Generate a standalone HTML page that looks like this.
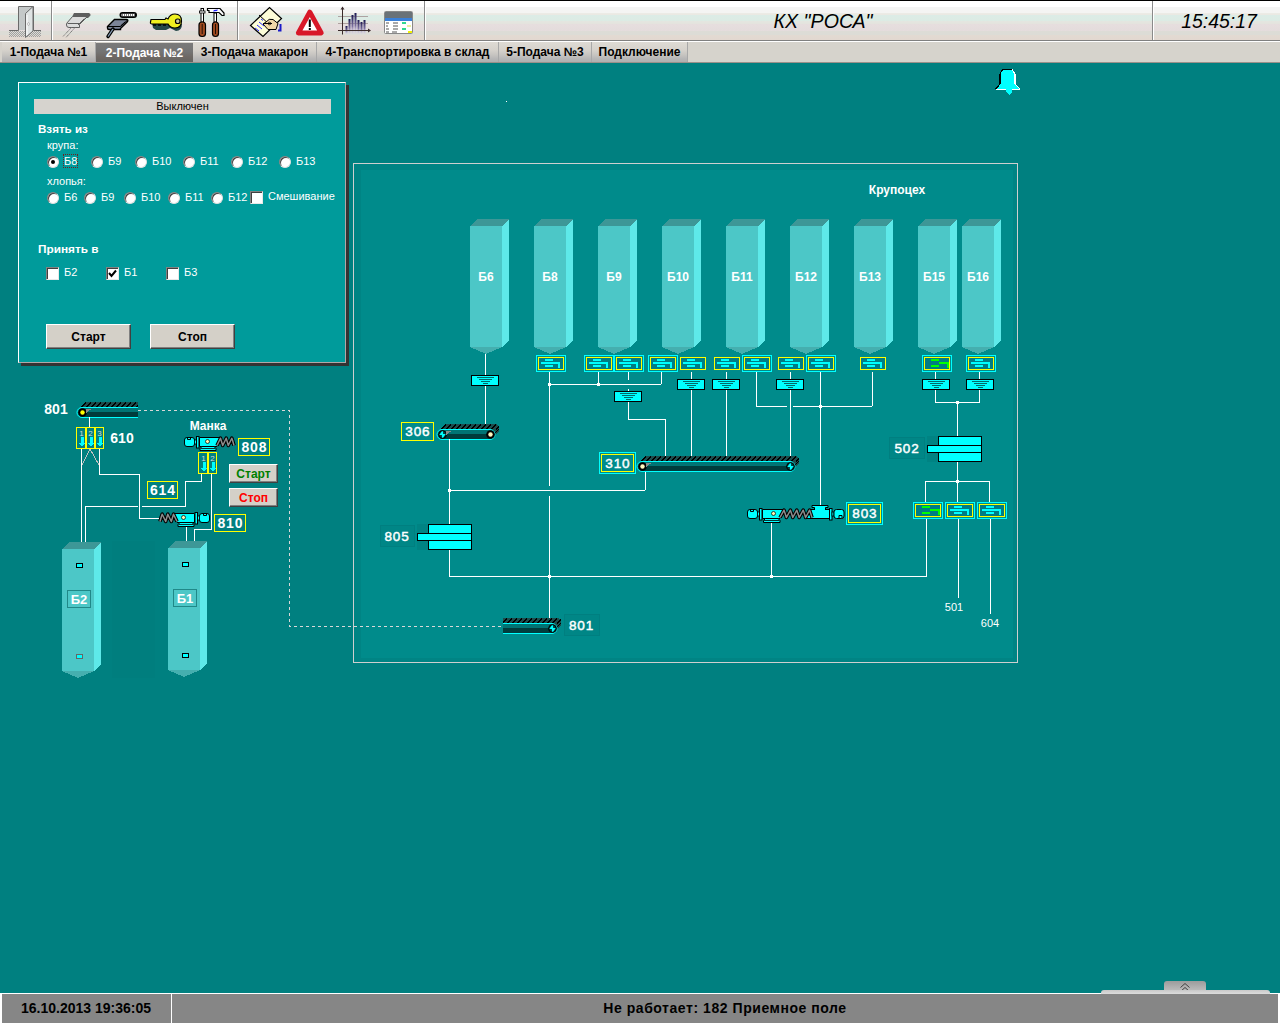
<!DOCTYPE html>
<html><head><meta charset="utf-8">
<style>
*{margin:0;padding:0;box-sizing:border-box}
html,body{width:1280px;height:1024px;overflow:hidden;background:#008080;font-family:"Liberation Sans", sans-serif}
.abs{position:absolute}
#tb{position:absolute;left:0;top:0;width:1280px;height:42px;border-top:1px solid #000;
background:linear-gradient(#ffffff 0px,#ffffff 6px,#f4f4f4 6px,#f4f4f2 12px,#ecece6 12px,#eae8e2 14px,#dcece6 14px,#dcebe4 20px,#e4e6e0 20px,#e4e4de 23px,#e6dede 23px,#e4dcdc 30px,#dddcd6 30px,#dcdcd6 34px,#e2dad2 34px,#e2d8d0 39px);}
#tb:after{content:"";position:absolute;left:0;top:39px;width:1280px;height:1px;background:#808080}
#tb:before{content:"";position:absolute;left:0;top:40px;width:1280px;height:1px;background:#fff}
.sep{position:absolute;top:0px;width:2px;height:39px;border-left:1px solid #8a8a8a;border-right:1px solid #fff}
#tabs{position:absolute;left:0;top:42px;width:1280px;height:21px;background:#d6d3cc;border-bottom:1px solid #9a908a}
.tab{position:absolute;top:0;height:20px;font-size:12px;font-weight:bold;color:#000;line-height:20px;text-align:center;
background:linear-gradient(#dedbd4,#d6d2cc 40%,#c6c4c0 65%,#b6b6b6 85%,#b0b0b0);border-right:1px solid #a8a8a8}
.tab.act{top:1px;height:19px;line-height:20px;background:linear-gradient(#7a7a7a,#747474 45%,#6e6864 75%,#646460);color:#fff;border-right:none}
#ttl{position:absolute;left:700px;top:9px;width:246px;text-align:center;font-size:19.6px;font-style:italic;color:#000}
#clk{position:absolute;left:1169px;top:9px;width:100px;text-align:center;font-size:19.4px;font-style:italic;color:#000}
#panel{position:absolute;left:18px;top:82px;width:328px;height:281px;background:#009b9b;border:1px solid #fff;border-right-color:#b0a8a8;border-bottom-color:#b0a8a8;
box-shadow:3px 3px 0 #333}
.lbl{position:absolute;color:#fff;font-size:11px;white-space:nowrap}
.b{font-weight:bold}
.radio{position:absolute;width:12px;height:12px;border-radius:50%;background:#fff;border:1px solid #808080;border-right-color:#e0e0e0;border-bottom-color:#e0e0e0;box-shadow:inset 1px 1px 0 #404040}
.chk{position:absolute;width:13px;height:13px;background:#fff;border:1px solid #808080;border-right-color:#e8e8e8;border-bottom-color:#e8e8e8;box-shadow:inset 1px 1px 0 #404040}
.btn{position:absolute;background:#d4d0c8;border:1px solid #fff;border-right-color:#404040;border-bottom-color:#404040;box-shadow:inset -1px -1px 0 #808080;font-size:12px;font-weight:bold;text-align:center;color:#000}
#main{position:absolute;left:353px;top:163px;width:665px;height:500px;border:1px solid #cfcfcf;background:#008484}
#maini{position:absolute;left:7px;top:6px;width:652px;height:488px;background:#008b8b}
#status{position:absolute;left:0;top:993px;width:1280px;height:31px;background:#fff}
#st1{position:absolute;left:2px;top:1px;width:169px;height:29px;background:#868686;font-size:14px;font-weight:bold;line-height:29px;padding-left:19px;color:#000}
#st2{position:absolute;left:172px;top:1px;width:1106px;height:29px;background:#868686;font-size:14px;font-weight:bold;line-height:29px;text-align:center;color:#000;letter-spacing:0.55px}
svg text{font-family:"Liberation Sans", sans-serif}
</style></head><body>
<div id="tb">
 <div class="sep" style="left:51px"></div>
 <div class="sep" style="left:237px"></div>
 <div class="sep" style="left:424px"></div>
 <div class="sep" style="left:1152px"></div>
 <div id="ttl">КХ "РОСА"</div>
 <div id="clk">15:45:17</div>
 <svg class="abs" style="left:0;top:0" width="440" height="41" viewBox="0 0 440 41">
<defs><pattern id="dots" width="2" height="2" patternUnits="userSpaceOnUse"><rect width="1" height="1" fill="#a0a0a0"/><rect x="1" y="1" width="1" height="1" fill="#a0a0a0"/></pattern>
<linearGradient id="barg" x1="0" y1="0" x2="0" y2="1"><stop offset="0" stop-color="#1c1850"/><stop offset="0.6" stop-color="#7c70a0"/><stop offset="1" stop-color="#d8d0f0" stop-opacity="0.3"/></linearGradient></defs>
<!-- door -->
<rect x="9" y="30" width="32" height="6" fill="url(#dots)"/>
<path d="M9 29.5 H18.5 V5.5 H33.5 V29.5 H41" fill="none" stroke="#6a6a6a" stroke-width="1"/>
<rect x="19" y="6" width="14" height="23" fill="#c4c8c8"/>
<path d="M25.5 12.5 L33 5.5 V30 L25.5 36.5 Z" fill="#dfe3e3" stroke="#6a6a6a" stroke-width="1"/>
<path d="M27 14 V34" stroke="#fff" stroke-width="1"/>
<ellipse cx="28.5" cy="23" rx="0.9" ry="1.5" fill="#fff" stroke="#888" stroke-width="0.5"/>
<!-- plug gray -->
<path d="M74 12 H89 Q91 12.5 90.5 14.5 L88 17 H72.5 L72.5 15 Z" fill="#5e5e5e"/>
<path d="M72.5 15.5 H87.5 L79.5 23.5 V26.5 H69 Q66.5 26.5 66.5 24 V22.5 Z" fill="#dcdcdc" stroke="#5e5e5e" stroke-width="1"/>
<path d="M67.5 22.5 H79.5 L87.5 15.5 M84 18 L78 24" fill="none" stroke="#5e5e5e" stroke-width="1"/>
<path d="M72 26 L63 35.5 M75.5 26 L66 36.5" stroke="#6e6e6e" stroke-width="1" stroke-dasharray="1.2 0.6"/>
<!-- plug dark -->
<rect x="119.5" y="11" width="17.5" height="6" rx="3" fill="#000"/>
<rect x="121.5" y="12.8" width="13.5" height="2.4" fill="#fff"/>
<path d="M122 14 H135" stroke="#000" stroke-width="1.2" stroke-dasharray="1 1"/>
<path d="M114.5 18.5 H126.5 Q128.5 18.5 127.5 20.5 L120.5 27.5 V28.5 H109 Q107.5 28.5 107.5 27 V25.5 Z" fill="#7c8498" stroke="#000" stroke-width="1.4"/>
<path d="M108 25.5 H120.5 L127 19.5 M125 21 L120.5 25" fill="none" stroke="#000" stroke-width="1"/>
<path d="M113 28 L108 35.5" stroke="#000" stroke-width="3.4" stroke-linecap="round"/>
<path d="M113 28 L108 35.5" stroke="#8aa0b8" stroke-width="1.3"/>
<!-- key -->
<path d="M153 27 L156 29 H166 L170 27 L176 30 Q182 30 182 23 L167 22 H152 Z" fill="#254848"/>
<path d="M151 18.5 H165 L166 17 L168 18 Q170 13 175 13 Q181.5 13 181.5 20 Q181.5 27 175 27 Q170 27 168 23 H152 Q150 23 150.5 21 Z" fill="#f0f020" stroke="#000" stroke-width="1.2"/>
<rect x="175.5" y="18" width="4.5" height="4.5" rx="2" fill="#c8c8a0" stroke="#000" stroke-width="1.2"/>
<path d="M153 24 H166" stroke="#000" stroke-width="1.5" stroke-dasharray="3 2"/>
<!-- screwdriver -->
<rect x="201" y="7.5" width="2.5" height="13.5" fill="#fff" stroke="#000" stroke-width="1"/>
<rect x="199.5" y="10" width="5.5" height="2" fill="#fff" stroke="#000" stroke-width="0.8"/>
<rect x="199" y="21" width="6.5" height="14.5" rx="3" fill="#a04a20" stroke="#000" stroke-width="1.2"/>
<path d="M202.2 23 V33" stroke="#000" stroke-width="0.8"/>
<!-- hammer -->
<path d="M207.5 7.5 H220 L224 12 V14.5 H222 L219 11.5 H209 V9.5 H207.5 Z" fill="#fff" stroke="#000" stroke-width="1.2"/>
<path d="M214 9 L218 8.5 L217 10 L213 10.5 Z" fill="#2020ff"/>
<rect x="214" y="12" width="2.5" height="9" fill="#fff" stroke="#000" stroke-width="1"/>
<rect x="212.5" y="21" width="6" height="14.5" rx="3" fill="#a04a20" stroke="#000" stroke-width="1.2"/>
<path d="M215.5 23 V33" stroke="#000" stroke-width="0.8"/>
<!-- notebook -->
<path d="M250.5 24.5 L269.5 6.5 L281.5 17.5 L263 35.5 Z" fill="#fdfdd8" stroke="#000" stroke-width="1.2"/>
<path d="M259 14 L270.5 24.5" stroke="#000" stroke-width="1"/>
<path d="M261 18 L263 19.5 M259 21 L264 25 M257 24 L262 28 M255 27 L259 30" stroke="#2a2aff" stroke-width="1"/>
<path d="M266 21 Q269 17 273 18.5 L278 22.5 L276 28.5 H268 L263 23 Z" fill="#f0d8a8" stroke="#000" stroke-width="1"/>
<path d="M263 22.5 H272" stroke="#000" stroke-width="1"/>
<circle cx="269.5" cy="22.5" r="1.3" fill="none" stroke="#000" stroke-width="0.8"/>
<path d="M280.5 23 V29.5 H278" fill="none" stroke="#1a1ac8" stroke-width="2"/>
<!-- warning -->
<path d="M309.8 11 L321.3 32 H298.3 Z" fill="#fff" stroke="#d81828" stroke-width="4.8" stroke-linejoin="round"/>
<path d="M309.8 18.5 V26" stroke="#000" stroke-width="2"/>
<rect x="308.8" y="27" width="2" height="2" fill="#000"/>
<!-- chart -->
<path d="M338 15.5 H368 M338 22.5 H368" stroke="#a09090" stroke-width="0.8"/>
<g fill="url(#barg)">
<rect x="345.5" y="25" width="2" height="8"/><rect x="348.5" y="18" width="2" height="15"/><rect x="351.5" y="14" width="2" height="19"/>
<rect x="354.5" y="12" width="2" height="21"/><rect x="357.5" y="19" width="2" height="14"/><rect x="360.5" y="21" width="2" height="12"/><rect x="363.5" y="19" width="2" height="14"/>
</g>
<path d="M342.5 6.5 V33.5 M338 29.5 H369" stroke="#3a2a2a" stroke-width="1"/>
<path d="M340.5 8.5 L342.5 5.5 L344.5 8.5 Z M368 27.5 L371 29.5 L368 31.5 Z" fill="#3a2a2a"/>
<!-- table window -->
<rect x="384.5" y="10.5" width="28" height="22" rx="1" fill="#fff" stroke="#888" stroke-width="1"/>
<rect x="385" y="11" width="27" height="6" fill="#6a7278"/>
<rect x="385" y="17" width="27" height="3" fill="#3a80d8"/>
<path d="M386 22 H389 M393 22 H398 M386 25 H388 M393 25 H398 M386 28 H389 M393 28 H398 M386 31 H389 M392 31 H397" stroke="#555" stroke-width="1"/>
<rect x="402" y="21" width="4" height="2" fill="#30d890"/><rect x="402" y="27" width="4" height="2" fill="#30d890"/>
<rect x="408" y="30" width="4" height="2" fill="#f0f000"/><rect x="407" y="24" width="4" height="2" fill="#e8f0a0"/>
</svg>
</div>
<div id="tabs">
 <div class="tab" style="left:2px;width:94px">1-Подача №1</div>
 <div class="tab act" style="left:96px;width:97px">2-Подача №2</div>
 <div class="tab" style="left:193px;width:124px">3-Подача макарон</div>
 <div class="tab" style="left:317px;width:182px">4-Транспортировка в склад</div>
 <div class="tab" style="left:499px;width:93px">5-Подача №3</div>
 <div class="tab" style="left:592px;width:96px">Подключение</div>
</div>
<div id="main"><div id="maini"></div></div>
<div id="panel">
 <div class="abs" style="left:15px;top:16px;width:297px;height:15px;background:#d6d3ce;font-size:11px;line-height:15px;text-align:center;color:#000">Выключен</div>
 <div class="lbl b" style="left:19px;top:39px;font-size:11.6px">Взять из</div>
 <div class="lbl" style="left:28px;top:56px">крупа:</div>
 <div class="radio" style="left:28px;top:73px"><div style="position:absolute;left:3px;top:3px;width:4px;height:4px;border-radius:50%;background:#000"></div></div><div class="lbl" style="left:45px;top:72px;outline:1px dotted #702020;outline-offset:0px;">Б8</div>
<div class="radio" style="left:72px;top:73px"></div><div class="lbl" style="left:89px;top:72px;">Б9</div>
<div class="radio" style="left:116px;top:73px"></div><div class="lbl" style="left:133px;top:72px;">Б10</div>
<div class="radio" style="left:164px;top:73px"></div><div class="lbl" style="left:181px;top:72px;">Б11</div>
<div class="radio" style="left:212px;top:73px"></div><div class="lbl" style="left:229px;top:72px;">Б12</div>
<div class="radio" style="left:260px;top:73px"></div><div class="lbl" style="left:277px;top:72px;">Б13</div>
<div class="radio" style="left:28px;top:109px"></div><div class="lbl" style="left:45px;top:108px;">Б6</div>
<div class="radio" style="left:65px;top:109px"></div><div class="lbl" style="left:82px;top:108px;">Б9</div>
<div class="radio" style="left:105px;top:109px"></div><div class="lbl" style="left:122px;top:108px;">Б10</div>
<div class="radio" style="left:149px;top:109px"></div><div class="lbl" style="left:166px;top:108px;">Б11</div>
<div class="radio" style="left:192px;top:109px"></div><div class="lbl" style="left:209px;top:108px;">Б12</div>
<div class="chk" style="left:231px;top:108px"></div><div class="lbl" style="left:249px;top:107px">Смешивание</div>
<div class="chk" style="left:27px;top:184px"></div><div class="lbl" style="left:45px;top:183px">Б2</div>
<div class="chk" style="left:87px;top:184px"><svg width="11" height="11" style="position:absolute;left:0;top:0"><path d="M2 5 L4.5 8 L9 2.5" fill="none" stroke="#000" stroke-width="2"/></svg></div><div class="lbl" style="left:105px;top:183px">Б1</div>
<div class="chk" style="left:147px;top:184px"></div><div class="lbl" style="left:165px;top:183px">Б3</div>
 <div class="lbl" style="left:28px;top:92px">хлопья:</div>
 <div class="lbl b" style="left:19px;top:159px;font-size:11.8px">Принять в</div>
 <div class="btn" style="left:27px;top:241px;width:85px;height:25px;line-height:25px">Старт</div>
 <div class="btn" style="left:131px;top:241px;width:85px;height:25px;line-height:25px">Стоп</div>
</div>
<div class="btn" style="left:229px;top:464px;width:49px;height:19px;line-height:19px;color:#008000">Старт</div>
<div class="btn" style="left:229px;top:488px;width:49px;height:19px;line-height:19px;color:#ff0000">Стоп</div>
<svg class="abs" style="left:0;top:0" width="1280" height="1024" viewBox="0 0 1280 1024" shape-rendering="crispEdges">
<rect x="380.5" y="525.5" width="34" height="21" fill="#008686" stroke="#007f80"/>
<rect x="889.5" y="437.5" width="35" height="21" fill="#008686" stroke="#007f80"/>
<rect x="564.5" y="614.5" width="35" height="21" fill="#008686" stroke="#007f80"/>
<rect x="417" y="524" width="11" height="26" fill="#008383"/>
<rect x="927" y="436" width="11" height="26" fill="#008383"/>
<polygon points="470,226 477,219 509,219 502,226" fill="#3d9797"/>
<rect x="470" y="226" width="32" height="121" fill="#4cc7c7"/>
<polygon points="502,226 509,219 509,340 502,347" fill="#5ee9e9"/>
<polygon points="470,347 502,347 486,354" fill="#45afaf"/>
<text x="486" y="281" text-anchor="middle" font-size="12" font-weight="bold" fill="#fff" >Б6</text>
<polygon points="534,226 541,219 573,219 566,226" fill="#3d9797"/>
<rect x="534" y="226" width="32" height="121" fill="#4cc7c7"/>
<polygon points="566,226 573,219 573,340 566,347" fill="#5ee9e9"/>
<polygon points="534,347 566,347 550,354" fill="#45afaf"/>
<text x="550" y="281" text-anchor="middle" font-size="12" font-weight="bold" fill="#fff" >Б8</text>
<polygon points="598,226 605,219 637,219 630,226" fill="#3d9797"/>
<rect x="598" y="226" width="32" height="121" fill="#4cc7c7"/>
<polygon points="630,226 637,219 637,340 630,347" fill="#5ee9e9"/>
<polygon points="598,347 630,347 614,354" fill="#45afaf"/>
<text x="614" y="281" text-anchor="middle" font-size="12" font-weight="bold" fill="#fff" >Б9</text>
<polygon points="662,226 669,219 701,219 694,226" fill="#3d9797"/>
<rect x="662" y="226" width="32" height="121" fill="#4cc7c7"/>
<polygon points="694,226 701,219 701,340 694,347" fill="#5ee9e9"/>
<polygon points="662,347 694,347 678,354" fill="#45afaf"/>
<text x="678" y="281" text-anchor="middle" font-size="12" font-weight="bold" fill="#fff" >Б10</text>
<polygon points="726,226 733,219 765,219 758,226" fill="#3d9797"/>
<rect x="726" y="226" width="32" height="121" fill="#4cc7c7"/>
<polygon points="758,226 765,219 765,340 758,347" fill="#5ee9e9"/>
<polygon points="726,347 758,347 742,354" fill="#45afaf"/>
<text x="742" y="281" text-anchor="middle" font-size="12" font-weight="bold" fill="#fff" >Б11</text>
<polygon points="790,226 797,219 829,219 822,226" fill="#3d9797"/>
<rect x="790" y="226" width="32" height="121" fill="#4cc7c7"/>
<polygon points="822,226 829,219 829,340 822,347" fill="#5ee9e9"/>
<polygon points="790,347 822,347 806,354" fill="#45afaf"/>
<text x="806" y="281" text-anchor="middle" font-size="12" font-weight="bold" fill="#fff" >Б12</text>
<polygon points="854,226 861,219 893,219 886,226" fill="#3d9797"/>
<rect x="854" y="226" width="32" height="121" fill="#4cc7c7"/>
<polygon points="886,226 893,219 893,340 886,347" fill="#5ee9e9"/>
<polygon points="854,347 886,347 870,354" fill="#45afaf"/>
<text x="870" y="281" text-anchor="middle" font-size="12" font-weight="bold" fill="#fff" >Б13</text>
<polygon points="918,226 925,219 957,219 950,226" fill="#3d9797"/>
<rect x="918" y="226" width="32" height="121" fill="#4cc7c7"/>
<polygon points="950,226 957,219 957,340 950,347" fill="#5ee9e9"/>
<polygon points="918,347 950,347 934,354" fill="#45afaf"/>
<text x="934" y="281" text-anchor="middle" font-size="12" font-weight="bold" fill="#fff" >Б15</text>
<polygon points="962,226 969,219 1001,219 994,226" fill="#3d9797"/>
<rect x="962" y="226" width="32" height="121" fill="#4cc7c7"/>
<polygon points="994,226 1001,219 1001,340 994,347" fill="#5ee9e9"/>
<polygon points="962,347 994,347 978,354" fill="#45afaf"/>
<text x="978" y="281" text-anchor="middle" font-size="12" font-weight="bold" fill="#fff" >Б16</text>
<rect x="536.5" y="355.5" width="29" height="16" fill="none" stroke="#00ffff"/>
<rect x="538.5" y="357.5" width="25" height="12" fill="#007d84" stroke="#ffff00"/>
<path d="M545 359h8v2h-8z M541 362h19v6h-2v-4h-17z M545 365h8v2h-8z" fill="#00ffff"/>
<rect x="584.5" y="355.5" width="29" height="16" fill="none" stroke="#00ffff"/>
<rect x="586.5" y="357.5" width="25" height="12" fill="#007d84" stroke="#ffff00"/>
<path d="M593 359h8v2h-8z M589 362h19v6h-2v-4h-17z M593 365h8v2h-8z" fill="#00ffff"/>
<rect x="614.5" y="355.5" width="29" height="16" fill="none" stroke="#00ffff"/>
<rect x="616.5" y="357.5" width="25" height="12" fill="#007d84" stroke="#ffff00"/>
<path d="M623 359h8v2h-8z M619 362h19v6h-2v-4h-17z M623 365h8v2h-8z" fill="#00ffff"/>
<rect x="648.5" y="355.5" width="29" height="16" fill="none" stroke="#00ffff"/>
<rect x="650.5" y="357.5" width="25" height="12" fill="#007d84" stroke="#ffff00"/>
<path d="M657 359h8v2h-8z M653 362h19v6h-2v-4h-17z M657 365h8v2h-8z" fill="#00ffff"/>
<rect x="680.5" y="357.5" width="25" height="12" fill="#007d84" stroke="#ffff00"/>
<path d="M687 359h8v2h-8z M683 362h19v6h-2v-4h-17z M687 365h8v2h-8z" fill="#00ffff"/>
<rect x="714.5" y="357.5" width="25" height="12" fill="#007d84" stroke="#ffff00"/>
<path d="M721 359h8v2h-8z M717 362h19v6h-2v-4h-17z M721 365h8v2h-8z" fill="#00ffff"/>
<rect x="742.5" y="355.5" width="29" height="16" fill="none" stroke="#00ffff"/>
<rect x="744.5" y="357.5" width="25" height="12" fill="#007d84" stroke="#ffff00"/>
<path d="M751 359h8v2h-8z M747 362h19v6h-2v-4h-17z M751 365h8v2h-8z" fill="#00ffff"/>
<rect x="778.5" y="357.5" width="25" height="12" fill="#007d84" stroke="#ffff00"/>
<path d="M785 359h8v2h-8z M781 362h19v6h-2v-4h-17z M785 365h8v2h-8z" fill="#00ffff"/>
<rect x="806.5" y="355.5" width="29" height="16" fill="none" stroke="#00ffff"/>
<rect x="808.5" y="357.5" width="25" height="12" fill="#007d84" stroke="#ffff00"/>
<path d="M815 359h8v2h-8z M811 362h19v6h-2v-4h-17z M815 365h8v2h-8z" fill="#00ffff"/>
<rect x="860.5" y="357.5" width="25" height="12" fill="#007d84" stroke="#ffff00"/>
<path d="M867 359h8v2h-8z M863 362h19v6h-2v-4h-17z M867 365h8v2h-8z" fill="#00ffff"/>
<rect x="922.5" y="355.5" width="29" height="16" fill="none" stroke="#00ffff"/>
<rect x="924.5" y="357.5" width="25" height="12" fill="#007d84" stroke="#ffff00"/>
<path d="M931 359h8v2h-8z M939 362h10v6h-2v-4h-8z M931 365h8v2h-8z" fill="#00ff00"/>
<rect x="966.5" y="355.5" width="29" height="16" fill="none" stroke="#00ffff"/>
<rect x="968.5" y="357.5" width="25" height="12" fill="#007d84" stroke="#ffff00"/>
<path d="M975 359h8v2h-8z M971 362h19v6h-2v-4h-17z M975 365h8v2h-8z" fill="#00ffff"/>
<path d="M485.5 354 L485.5 375" fill="none" stroke="#ffffff" stroke-width="1"/>
<rect x="471.5" y="375.5" width="27" height="10" fill="#00ffff" stroke="#000"/>
<path d="M477 377.5h17 M479 379.5h13 M481 381.5h9 M483 383.5h5" stroke="#006b6b" stroke-width="1"/>
<path d="M485.5 386 L485.5 424" fill="none" stroke="#ffffff" stroke-width="1"/>
<path d="M549.5 372 L549.5 486" fill="none" stroke="#ffffff" stroke-width="1"/>
<path d="M549.5 496 L549.5 618" fill="none" stroke="#ffffff" stroke-width="1"/>
<path d="M549 384.5 L661 384.5" fill="none" stroke="#ffffff" stroke-width="1"/>
<path d="M598.5 372 L598.5 384" fill="none" stroke="#ffffff" stroke-width="1"/>
<path d="M661.5 372 L661.5 384" fill="none" stroke="#ffffff" stroke-width="1"/>
<rect x="548" y="383" width="3" height="3" fill="#fff"/>
<rect x="597" y="383" width="3" height="3" fill="#fff"/>
<path d="M628.5 372 L628.5 380" fill="none" stroke="#ffffff" stroke-width="1"/>
<path d="M628.5 389 L628.5 391" fill="none" stroke="#ffffff" stroke-width="1"/>
<rect x="614.5" y="391.5" width="27" height="10" fill="#00ffff" stroke="#000"/>
<path d="M620 393.5h17 M622 395.5h13 M624 397.5h9 M626 399.5h5" stroke="#006b6b" stroke-width="1"/>
<path d="M628.5 402 L628.5 419.5 L665.5 419.5 L665.5 456" fill="none" stroke="#ffffff" stroke-width="1"/>
<path d="M691.5 372 L691.5 379" fill="none" stroke="#ffffff" stroke-width="1"/>
<rect x="677.5" y="379.5" width="27" height="10" fill="#00ffff" stroke="#000"/>
<path d="M683 381.5h17 M685 383.5h13 M687 385.5h9 M689 387.5h5" stroke="#006b6b" stroke-width="1"/>
<path d="M691.5 390 L691.5 456" fill="none" stroke="#ffffff" stroke-width="1"/>
<path d="M726.5 372 L726.5 379" fill="none" stroke="#ffffff" stroke-width="1"/>
<rect x="712.5" y="379.5" width="27" height="10" fill="#00ffff" stroke="#000"/>
<path d="M718 381.5h17 M720 383.5h13 M722 385.5h9 M724 387.5h5" stroke="#006b6b" stroke-width="1"/>
<path d="M726.5 390 L726.5 456" fill="none" stroke="#ffffff" stroke-width="1"/>
<path d="M756.5 372 L756.5 406.5 L787 406.5" fill="none" stroke="#ffffff" stroke-width="1"/>
<path d="M793 406.5 L872 406.5" fill="none" stroke="#ffffff" stroke-width="1"/>
<path d="M872.5 372 L872.5 406" fill="none" stroke="#ffffff" stroke-width="1"/>
<path d="M790.5 372 L790.5 379" fill="none" stroke="#ffffff" stroke-width="1"/>
<rect x="776.5" y="379.5" width="27" height="10" fill="#00ffff" stroke="#000"/>
<path d="M782 381.5h17 M784 383.5h13 M786 385.5h9 M788 387.5h5" stroke="#006b6b" stroke-width="1"/>
<path d="M790.5 390 L790.5 456" fill="none" stroke="#ffffff" stroke-width="1"/>
<path d="M820.5 372 L820.5 505" fill="none" stroke="#ffffff" stroke-width="1"/>
<rect x="819" y="405" width="3" height="3" fill="#fff"/>
<path d="M935.5 372 L935.5 379" fill="none" stroke="#ffffff" stroke-width="1"/>
<rect x="922.5" y="379.5" width="27" height="10" fill="#00ffff" stroke="#000"/>
<path d="M928 381.5h17 M930 383.5h13 M932 385.5h9 M934 387.5h5" stroke="#006b6b" stroke-width="1"/>
<path d="M979.5 372 L979.5 379" fill="none" stroke="#ffffff" stroke-width="1"/>
<rect x="966.5" y="379.5" width="27" height="10" fill="#00ffff" stroke="#000"/>
<path d="M972 381.5h17 M974 383.5h13 M976 385.5h9 M978 387.5h5" stroke="#006b6b" stroke-width="1"/>
<path d="M935.5 390 L935.5 402.5 L979.5 402.5 L979.5 390" fill="none" stroke="#ffffff" stroke-width="1"/>
<path d="M957.5 402 L957.5 436" fill="none" stroke="#ffffff" stroke-width="1"/>
<rect x="956" y="401" width="3" height="3" fill="#fff"/>
<path d="M957.5 462 L957.5 481" fill="none" stroke="#ffffff" stroke-width="1"/>
<path d="M925 481.5 L989 481.5" fill="none" stroke="#ffffff" stroke-width="1"/>
<rect x="956" y="480" width="3" height="3" fill="#fff"/>
<path d="M925.5 481 L925.5 502" fill="none" stroke="#ffffff" stroke-width="1"/>
<path d="M957.5 481 L957.5 502" fill="none" stroke="#ffffff" stroke-width="1"/>
<path d="M989.5 481 L989.5 502" fill="none" stroke="#ffffff" stroke-width="1"/>
<rect x="913.5" y="502.5" width="29" height="16" fill="none" stroke="#00ffff"/>
<rect x="915.5" y="504.5" width="25" height="12" fill="#007d84" stroke="#ffff00"/>
<path d="M922 506h8v2h-8z M930 509h10v6h-2v-4h-8z M922 512h8v2h-8z" fill="#00ff00"/>
<rect x="945.5" y="502.5" width="29" height="16" fill="none" stroke="#00ffff"/>
<rect x="947.5" y="504.5" width="25" height="12" fill="#007d84" stroke="#ffff00"/>
<path d="M954 506h8v2h-8z M950 509h19v6h-2v-4h-17z M954 512h8v2h-8z" fill="#00ffff"/>
<rect x="977.5" y="502.5" width="29" height="16" fill="none" stroke="#00ffff"/>
<rect x="979.5" y="504.5" width="25" height="12" fill="#007d84" stroke="#ffff00"/>
<path d="M986 506h8v2h-8z M982 509h19v6h-2v-4h-17z M986 512h8v2h-8z" fill="#00ffff"/>
<path d="M926.5 519 L926.5 576.5 L449 576.5" fill="none" stroke="#ffffff" stroke-width="1"/>
<path d="M958.5 519 L958.5 598" fill="none" stroke="#ffffff" stroke-width="1"/>
<path d="M990.5 519 L990.5 614" fill="none" stroke="#ffffff" stroke-width="1"/>
<text x="954" y="611" text-anchor="middle" font-size="11" font-weight="normal" fill="#fff" >501</text>
<text x="990" y="627" text-anchor="middle" font-size="11" font-weight="normal" fill="#fff" >604</text>
<rect x="548" y="575" width="3" height="3" fill="#fff"/>
<rect x="770" y="575" width="3" height="3" fill="#fff"/>
<polygon points="440,429 445,424 496,424 499,427 499,431 495,435" fill="#1c4d4d"/>
<clipPath id="cp437_429"><polygon points="440,429 445,424 499,424 499,431 495,435 495,429"/></clipPath>
<g clip-path="url(#cp437_429)">
<line x1="436" y1="429.5" x2="441" y2="424.5" stroke="#000" stroke-width="1.1"/>
<line x1="441" y1="429.5" x2="446" y2="424.5" stroke="#000" stroke-width="1.1"/>
<line x1="446" y1="429.5" x2="451" y2="424.5" stroke="#000" stroke-width="1.1"/>
<line x1="451" y1="429.5" x2="456" y2="424.5" stroke="#000" stroke-width="1.1"/>
<line x1="456" y1="429.5" x2="461" y2="424.5" stroke="#000" stroke-width="1.1"/>
<line x1="461" y1="429.5" x2="466" y2="424.5" stroke="#000" stroke-width="1.1"/>
<line x1="466" y1="429.5" x2="471" y2="424.5" stroke="#000" stroke-width="1.1"/>
<line x1="471" y1="429.5" x2="476" y2="424.5" stroke="#000" stroke-width="1.1"/>
<line x1="476" y1="429.5" x2="481" y2="424.5" stroke="#000" stroke-width="1.1"/>
<line x1="481" y1="429.5" x2="486" y2="424.5" stroke="#000" stroke-width="1.1"/>
<line x1="486" y1="429.5" x2="491" y2="424.5" stroke="#000" stroke-width="1.1"/>
<line x1="491" y1="429.5" x2="496" y2="424.5" stroke="#000" stroke-width="1.1"/>
<line x1="496" y1="429.5" x2="501" y2="424.5" stroke="#000" stroke-width="1.1"/>
<line x1="494" y1="434" x2="500" y2="428" stroke="#000" stroke-width="1.3"/>
</g>
<path d="M442 429.5 H490 A5 5 0 0 1 490 439.5 H442 A5 5 0 0 1 442 429.5Z" fill="#007474"/>
<rect x="440" y="434" width="52" height="5" fill="#003c3c"/>
<path d="M442 429.5 H490 A5 5 0 0 1 490 439.5 H442 A5 5 0 0 1 442 429.5" fill="none" stroke="#00ffff" shape-rendering="auto"/>
<circle cx="442.5" cy="434.5" r="4.3" fill="#000" shape-rendering="auto"/>
<circle cx="442.5" cy="434.5" r="3.2" fill="#003c3c" shape-rendering="auto"/>
<path d="M439.3 435.1 L441.9 431.3 H443.1 V435.1 Z M445.7 433.9 L443.1 437.7 H441.9 V433.9 Z" fill="#00ffff" shape-rendering="auto"/>
<polygon points="446,430.5 452,430.5 446,435" fill="#8a8a8a"/>
<circle cx="490.5" cy="434.5" r="4.3" fill="#000" shape-rendering="auto"/>
<circle cx="490.5" cy="434.5" r="2.2" fill="#fff8c0" shape-rendering="auto"/>
<rect x="401.5" y="422.5" width="32" height="18" fill="none" stroke="#ffff00"/>
<text x="417.9" y="436.36" text-anchor="middle" font-size="13.5" fill="#fff" stroke="#fff" stroke-width="0.45" letter-spacing="0.9">306</text>
<path d="M449.5 439 L449.5 576" fill="none" stroke="#ffffff" stroke-width="1"/>
<path d="M449 490.5 L645 490.5" fill="none" stroke="#ffffff" stroke-width="1"/>
<rect x="448" y="489" width="3" height="3" fill="#fff"/>
<path d="M645.5 471 L645.5 490" fill="none" stroke="#ffffff" stroke-width="1"/>
<polygon points="640,461 645,456 796,456 799,459 799,463 795,467" fill="#1c4d4d"/>
<clipPath id="cp637_461"><polygon points="640,461 645,456 799,456 799,463 795,467 795,461"/></clipPath>
<g clip-path="url(#cp637_461)">
<line x1="636" y1="461.5" x2="641" y2="456.5" stroke="#000" stroke-width="1.1"/>
<line x1="641" y1="461.5" x2="646" y2="456.5" stroke="#000" stroke-width="1.1"/>
<line x1="646" y1="461.5" x2="651" y2="456.5" stroke="#000" stroke-width="1.1"/>
<line x1="651" y1="461.5" x2="656" y2="456.5" stroke="#000" stroke-width="1.1"/>
<line x1="656" y1="461.5" x2="661" y2="456.5" stroke="#000" stroke-width="1.1"/>
<line x1="661" y1="461.5" x2="666" y2="456.5" stroke="#000" stroke-width="1.1"/>
<line x1="666" y1="461.5" x2="671" y2="456.5" stroke="#000" stroke-width="1.1"/>
<line x1="671" y1="461.5" x2="676" y2="456.5" stroke="#000" stroke-width="1.1"/>
<line x1="676" y1="461.5" x2="681" y2="456.5" stroke="#000" stroke-width="1.1"/>
<line x1="681" y1="461.5" x2="686" y2="456.5" stroke="#000" stroke-width="1.1"/>
<line x1="686" y1="461.5" x2="691" y2="456.5" stroke="#000" stroke-width="1.1"/>
<line x1="691" y1="461.5" x2="696" y2="456.5" stroke="#000" stroke-width="1.1"/>
<line x1="696" y1="461.5" x2="701" y2="456.5" stroke="#000" stroke-width="1.1"/>
<line x1="701" y1="461.5" x2="706" y2="456.5" stroke="#000" stroke-width="1.1"/>
<line x1="706" y1="461.5" x2="711" y2="456.5" stroke="#000" stroke-width="1.1"/>
<line x1="711" y1="461.5" x2="716" y2="456.5" stroke="#000" stroke-width="1.1"/>
<line x1="716" y1="461.5" x2="721" y2="456.5" stroke="#000" stroke-width="1.1"/>
<line x1="721" y1="461.5" x2="726" y2="456.5" stroke="#000" stroke-width="1.1"/>
<line x1="726" y1="461.5" x2="731" y2="456.5" stroke="#000" stroke-width="1.1"/>
<line x1="731" y1="461.5" x2="736" y2="456.5" stroke="#000" stroke-width="1.1"/>
<line x1="736" y1="461.5" x2="741" y2="456.5" stroke="#000" stroke-width="1.1"/>
<line x1="741" y1="461.5" x2="746" y2="456.5" stroke="#000" stroke-width="1.1"/>
<line x1="746" y1="461.5" x2="751" y2="456.5" stroke="#000" stroke-width="1.1"/>
<line x1="751" y1="461.5" x2="756" y2="456.5" stroke="#000" stroke-width="1.1"/>
<line x1="756" y1="461.5" x2="761" y2="456.5" stroke="#000" stroke-width="1.1"/>
<line x1="761" y1="461.5" x2="766" y2="456.5" stroke="#000" stroke-width="1.1"/>
<line x1="766" y1="461.5" x2="771" y2="456.5" stroke="#000" stroke-width="1.1"/>
<line x1="771" y1="461.5" x2="776" y2="456.5" stroke="#000" stroke-width="1.1"/>
<line x1="776" y1="461.5" x2="781" y2="456.5" stroke="#000" stroke-width="1.1"/>
<line x1="781" y1="461.5" x2="786" y2="456.5" stroke="#000" stroke-width="1.1"/>
<line x1="786" y1="461.5" x2="791" y2="456.5" stroke="#000" stroke-width="1.1"/>
<line x1="791" y1="461.5" x2="796" y2="456.5" stroke="#000" stroke-width="1.1"/>
<line x1="796" y1="461.5" x2="801" y2="456.5" stroke="#000" stroke-width="1.1"/>
<line x1="794" y1="466" x2="800" y2="460" stroke="#000" stroke-width="1.3"/>
</g>
<path d="M642 461.5 H790 A5 5 0 0 1 790 471.5 H642 A5 5 0 0 1 642 461.5Z" fill="#007474"/>
<rect x="640" y="466" width="152" height="5" fill="#003c3c"/>
<path d="M642 461.5 H790 A5 5 0 0 1 790 471.5 H642 A5 5 0 0 1 642 461.5" fill="none" stroke="#00ffff" shape-rendering="auto"/>
<circle cx="642.5" cy="466.5" r="4.3" fill="#000" shape-rendering="auto"/>
<circle cx="642.5" cy="466.5" r="2.2" fill="#fff8c0" shape-rendering="auto"/>
<polygon points="646,462.5 652,462.5 646,467" fill="#8a8a8a"/>
<circle cx="790.5" cy="466.5" r="4.3" fill="#000" shape-rendering="auto"/>
<circle cx="790.5" cy="466.5" r="3.2" fill="#003c3c" shape-rendering="auto"/>
<path d="M787.3 467.1 L789.9 463.3 H791.1 V467.1 Z M793.7 465.9 L791.1 469.7 H789.9 V465.9 Z" fill="#00ffff" shape-rendering="auto"/>
<rect x="599.5" y="452.5" width="36" height="21" fill="none" stroke="#00ffff"/>
<rect x="601.5" y="454.5" width="32" height="17" fill="none" stroke="#ffff00"/>
<text x="617.9" y="467.86" text-anchor="middle" font-size="13.5" fill="#fff" stroke="#fff" stroke-width="0.45" letter-spacing="0.9">310</text>
<rect x="428.5" y="524.5" width="43" height="25" fill="#00ffff" stroke="#000"/>
<rect x="417.5" y="533.5" width="54" height="7" fill="#00ffff" stroke="#000"/>
<text x="397" y="541" text-anchor="middle" font-size="13.5" font-weight="normal" fill="#fff" stroke="#fff" stroke-width="0.45" letter-spacing="0.9">805</text>
<rect x="938.5" y="436.5" width="43" height="25" fill="#00ffff" stroke="#000"/>
<rect x="927.5" y="445.5" width="54" height="7" fill="#00ffff" stroke="#000"/>
<text x="907" y="453" text-anchor="middle" font-size="13.5" font-weight="normal" fill="#fff" stroke="#fff" stroke-width="0.45" letter-spacing="0.9">502</text>
<path d="M771.5 522 L771.5 576" fill="none" stroke="#ffffff" stroke-width="1"/>
<g transform="translate(747,508)" shape-rendering="auto">
<rect x="0.5" y="1.5" width="10" height="9" rx="2.5" fill="#00ffff" stroke="#000"/>
<path d="M3.5 1.5 V3.5 H6.5 V1.5" fill="none" stroke="#000"/>
<rect x="10.5" y="4" width="2" height="4" fill="#00ffff" stroke="#000" stroke-width="0.8"/>
<rect x="12.5" y="0.5" width="2.5" height="11.5" fill="#00ffff" stroke="#000"/>
<path d="M15.5 1.5 H37 L33 10.5 H15.5 Z" fill="#00ffff" stroke="#000"/>
<circle cx="26.5" cy="5.5" r="2" fill="#fff4b0" stroke="#000" stroke-width="0.7"/>
<path d="M18.5 10.5 H31 L33 12.5 V14.5 H16.5 V12.5 Z" fill="#00ffff" stroke="#000"/>
<path d="M17 12.5 H32.5" stroke="#000" stroke-width="0.8"/>
<path d="M63 1.5 H82.5 V10.5 H58 Z" fill="#00ffff" stroke="#000"/>
<path d="M67.5 2 V-0.5 H65 V-2.5 H81 V-0.5 H78.5 V2" fill="#00ffff" stroke="#000"/>
<path d="M33 9.5 L37.0 2.2 L37.8 4.5 L39.4 9.5 L43.4 2.2 L44.2 4.5 L45.8 9.5 L49.8 2.2 L50.6 4.5 L52.2 9.5 L56.2 2.2 L57.0 4.5 L58.6 9.5 L62.6 2.2 L63.4 4.5 L65.0 9.5" fill="none" stroke="#000" stroke-width="3.6" stroke-linejoin="round"/>
<path d="M33 9.5 L37.0 2.2 L37.8 4.5 L39.4 9.5 L43.4 2.2 L44.2 4.5 L45.8 9.5 L49.8 2.2 L50.6 4.5 L52.2 9.5 L56.2 2.2 L57.0 4.5 L58.6 9.5 L62.6 2.2 L63.4 4.5 L65.0 9.5" fill="none" stroke="#8c8c8c" stroke-width="1.5" stroke-linejoin="round"/>
<rect x="82.5" y="0.5" width="2.5" height="11.5" fill="#00ffff" stroke="#000"/>
<rect x="85" y="4" width="2" height="4" fill="#00ffff" stroke="#000" stroke-width="0.8"/>
<rect x="87.0" y="1.5" width="10" height="9" rx="2.5" fill="#00ffff" stroke="#000"/>
<path d="M92.0 10.5 V7.5 H95.0 V10.5" fill="none" stroke="#000"/>
</g>
<rect x="846.5" y="502.5" width="36" height="22" fill="none" stroke="#00ffff"/>
<rect x="848.5" y="504.5" width="32" height="18" fill="none" stroke="#ffff00"/>
<text x="864.9" y="518.36" text-anchor="middle" font-size="13.5" fill="#fff" stroke="#fff" stroke-width="0.45" letter-spacing="0.9">803</text>
<polygon points="503,623 503,618 558,618 561,621 561,625 557,629" fill="#1c4d4d"/>
<clipPath id="cp503_623"><polygon points="503,623 503,618 561,618 561,625 557,629 557,623"/></clipPath>
<g clip-path="url(#cp503_623)">
<line x1="502" y1="623.5" x2="507" y2="618.5" stroke="#000" stroke-width="1.1"/>
<line x1="507" y1="623.5" x2="512" y2="618.5" stroke="#000" stroke-width="1.1"/>
<line x1="512" y1="623.5" x2="517" y2="618.5" stroke="#000" stroke-width="1.1"/>
<line x1="517" y1="623.5" x2="522" y2="618.5" stroke="#000" stroke-width="1.1"/>
<line x1="522" y1="623.5" x2="527" y2="618.5" stroke="#000" stroke-width="1.1"/>
<line x1="527" y1="623.5" x2="532" y2="618.5" stroke="#000" stroke-width="1.1"/>
<line x1="532" y1="623.5" x2="537" y2="618.5" stroke="#000" stroke-width="1.1"/>
<line x1="537" y1="623.5" x2="542" y2="618.5" stroke="#000" stroke-width="1.1"/>
<line x1="542" y1="623.5" x2="547" y2="618.5" stroke="#000" stroke-width="1.1"/>
<line x1="547" y1="623.5" x2="552" y2="618.5" stroke="#000" stroke-width="1.1"/>
<line x1="552" y1="623.5" x2="557" y2="618.5" stroke="#000" stroke-width="1.1"/>
<line x1="557" y1="623.5" x2="562" y2="618.5" stroke="#000" stroke-width="1.1"/>
<line x1="556" y1="628" x2="562" y2="622" stroke="#000" stroke-width="1.3"/>
</g>
<path d="M503 623.5 H552 A5 5 0 0 1 552 633.5 H503 V623.5Z" fill="#007474"/>
<rect x="503" y="628" width="51" height="5" fill="#003c3c"/>
<path d="M503 623.5 H552 A5 5 0 0 1 552 633.5 H503 " fill="none" stroke="#00ffff" shape-rendering="auto"/>
<circle cx="552.5" cy="628.5" r="4.3" fill="#000" shape-rendering="auto"/>
<circle cx="552.5" cy="628.5" r="3.2" fill="#003c3c" shape-rendering="auto"/>
<path d="M549.3 629.1 L551.9 625.3 H553.1 V629.1 Z M555.7 627.9 L553.1 631.7 H551.9 V627.9 Z" fill="#00ffff" shape-rendering="auto"/>
<text x="581.5" y="630" text-anchor="middle" font-size="13.5" font-weight="normal" fill="#fff" stroke="#fff" stroke-width="0.45" letter-spacing="0.9">801</text>
<text x="897" y="194" text-anchor="middle" font-size="12" font-weight="bold" fill="#fff" >Крупоцех</text>
<polygon points="80,407 85,402 138,402 138,407" fill="#1c4d4d"/>
<clipPath id="cp77_407"><polygon points="80,407 85,402 138,402 138,407"/></clipPath>
<g clip-path="url(#cp77_407)">
<line x1="76" y1="407.5" x2="81" y2="402.5" stroke="#000" stroke-width="1.1"/>
<line x1="81" y1="407.5" x2="86" y2="402.5" stroke="#000" stroke-width="1.1"/>
<line x1="86" y1="407.5" x2="91" y2="402.5" stroke="#000" stroke-width="1.1"/>
<line x1="91" y1="407.5" x2="96" y2="402.5" stroke="#000" stroke-width="1.1"/>
<line x1="96" y1="407.5" x2="101" y2="402.5" stroke="#000" stroke-width="1.1"/>
<line x1="101" y1="407.5" x2="106" y2="402.5" stroke="#000" stroke-width="1.1"/>
<line x1="106" y1="407.5" x2="111" y2="402.5" stroke="#000" stroke-width="1.1"/>
<line x1="111" y1="407.5" x2="116" y2="402.5" stroke="#000" stroke-width="1.1"/>
<line x1="116" y1="407.5" x2="121" y2="402.5" stroke="#000" stroke-width="1.1"/>
<line x1="121" y1="407.5" x2="126" y2="402.5" stroke="#000" stroke-width="1.1"/>
<line x1="126" y1="407.5" x2="131" y2="402.5" stroke="#000" stroke-width="1.1"/>
<line x1="131" y1="407.5" x2="136" y2="402.5" stroke="#000" stroke-width="1.1"/>
<line x1="136" y1="407.5" x2="141" y2="402.5" stroke="#000" stroke-width="1.1"/>
</g>
<path d="M82 407.5 H138 V417.5 H82 A5 5 0 0 1 82 407.5Z" fill="#007474"/>
<rect x="80" y="412" width="58" height="5" fill="#003c3c"/>
<path d="M82 407.5 H138 M138 417.5 H82 A5 5 0 0 1 82 407.5" fill="none" stroke="#00ffff" shape-rendering="auto"/>
<circle cx="82.5" cy="412.5" r="4.3" fill="#000" shape-rendering="auto"/>
<circle cx="82.5" cy="412.5" r="2.2" fill="#ffff00" shape-rendering="auto"/>
<polygon points="86,408.5 92,408.5 86,413" fill="#8a8a8a"/>
<text x="56" y="414" text-anchor="middle" font-size="14" font-weight="bold" fill="#fff" >801</text>
<path d="M89.5 417 L89.5 427" fill="none" stroke="#ffffff" stroke-width="1"/>
<rect x="76.5" y="427.5" width="27" height="21" fill="none" stroke="#ffff00"/>
<rect x="85" y="427" width="2" height="22" fill="#ffff00"/>
<rect x="94" y="427" width="2" height="22" fill="#ffff00"/>
<text x="81.5" y="436" text-anchor="middle" font-size="8" fill="#d8d8d8">1</text>
<path d="M80.5 437h3v5.5h2.5l-4 4.5l-4 -4.5h2.5z" fill="#00ffff"/>
<text x="90.5" y="436" text-anchor="middle" font-size="8" fill="#d8d8d8">2</text>
<path d="M89.5 437h3v5.5h2.5l-4 4.5l-4 -4.5h2.5z" fill="#00ffff"/>
<text x="99.5" y="436" text-anchor="middle" font-size="8" fill="#d8d8d8">3</text>
<path d="M98.5 437h3v5.5h2.5l-4 4.5l-4 -4.5h2.5z" fill="#00ffff"/>
<text x="122" y="443" text-anchor="middle" font-size="14" font-weight="bold" fill="#fff" >610</text>
<path d="M81.5 449 L81.5 542" fill="none" stroke="#ffffff" stroke-width="1"/>
<path d="M90 449 L82 465" fill="none" stroke="#c0c0c0" stroke-width="1"/>
<path d="M90 449 L99 465" fill="none" stroke="#c0c0c0" stroke-width="1"/>
<path d="M99.5 449 L99.5 474.5 L139.5 474.5 L139.5 518.5 L160 518.5" fill="none" stroke="#ffffff" stroke-width="1"/>
<path d="M85.5 542 L85.5 506.5 L137.5 506.5" fill="none" stroke="#ffffff" stroke-width="1"/>
<path d="M142 506.5 L185 506.5" fill="none" stroke="#ffffff" stroke-width="1"/>
<path d="M185.5 506.5 L185.5 481.5 L201.5 481.5 L201.5 474" fill="none" stroke="#ffffff" stroke-width="1"/>
<path d="M211.5 474 L211.5 529.5 L194.5 529.5 L194.5 542" fill="none" stroke="#ffffff" stroke-width="1"/>
<path d="M186.5 527 L186.5 542" fill="none" stroke="#ffffff" stroke-width="1"/>
<rect x="147.5" y="481.5" width="30" height="17" fill="none" stroke="#ffff00"/>
<text x="162.9" y="495.04" text-anchor="middle" font-size="14" font-weight="bold" fill="#fff" letter-spacing="0.8">614</text>
<text x="208" y="430" text-anchor="middle" font-size="12" font-weight="bold" fill="#fff" >Манка</text>
<g transform="translate(184,436)" shape-rendering="auto">
<rect x="0.5" y="1.5" width="10" height="9" rx="2.5" fill="#00ffff" stroke="#000"/>
<path d="M3.5 1.5 V3.5 H6.5 V1.5" fill="none" stroke="#000"/>
<rect x="10.5" y="4" width="2" height="4" fill="#00ffff" stroke="#000" stroke-width="0.8"/>
<rect x="12.5" y="0.5" width="2.5" height="11.5" fill="#00ffff" stroke="#000"/>
<path d="M15.5 1.5 H37 L33 10.5 H15.5 Z" fill="#00ffff" stroke="#000"/>
<circle cx="23.5" cy="5.5" r="2" fill="#fff4b0" stroke="#000" stroke-width="0.7"/>
<path d="M18 10.5 H30 L32 12.5 V14.5 H16 V12.5 Z" fill="#00ffff" stroke="#000"/>
<path d="M16.5 12.5 H31.5" stroke="#000" stroke-width="0.8"/>
<path d="M33 9.5 L36.5 2.2 L37.2 4.5 L38.7 9.5 L42.2 2.2 L42.9 4.5 L44.3 9.5 L47.8 2.2 L48.6 4.5 L50.0 9.5" fill="none" stroke="#000" stroke-width="3.6" stroke-linejoin="round"/>
<path d="M33 9.5 L36.5 2.2 L37.2 4.5 L38.7 9.5 L42.2 2.2 L42.9 4.5 L44.3 9.5 L47.8 2.2 L48.6 4.5 L50.0 9.5" fill="none" stroke="#8c8c8c" stroke-width="1.5" stroke-linejoin="round"/>
</g>
<rect x="238.5" y="438.5" width="31" height="17" fill="none" stroke="#ffff00"/>
<text x="254.4" y="452.04" text-anchor="middle" font-size="14" font-weight="bold" fill="#fff" letter-spacing="0.8">808</text>
<rect x="198.5" y="452.5" width="18" height="21" fill="none" stroke="#ffff00"/>
<rect x="207" y="452" width="2" height="22" fill="#ffff00"/>
<text x="203.5" y="461" text-anchor="middle" font-size="8" fill="#d8d8d8">1</text>
<path d="M202.5 462h3v5.5h2.5l-4 4.5l-4 -4.5h2.5z" fill="#00ffff"/>
<text x="212.5" y="461" text-anchor="middle" font-size="8" fill="#d8d8d8">2</text>
<path d="M211.5 462h3v5.5h2.5l-4 4.5l-4 -4.5h2.5z" fill="#00ffff"/>
<g transform="translate(160,512) translate(50,0) scale(-1,1)" shape-rendering="auto">
<rect x="0.5" y="1.5" width="10" height="9" rx="2.5" fill="#00ffff" stroke="#000"/>
<path d="M3.5 1.5 V3.5 H6.5 V1.5" fill="none" stroke="#000"/>
<rect x="10.5" y="4" width="2" height="4" fill="#00ffff" stroke="#000" stroke-width="0.8"/>
<rect x="12.5" y="0.5" width="2.5" height="11.5" fill="#00ffff" stroke="#000"/>
<path d="M15.5 1.5 H37 L33 10.5 H15.5 Z" fill="#00ffff" stroke="#000"/>
<circle cx="26.5" cy="5.5" r="2" fill="#fff4b0" stroke="#000" stroke-width="0.7"/>
<path d="M18 10.5 H30 L32 12.5 V14.5 H16 V12.5 Z" fill="#00ffff" stroke="#000"/>
<path d="M16.5 12.5 H31.5" stroke="#000" stroke-width="0.8"/>
<path d="M33 9.5 L36.5 2.2 L37.2 4.5 L38.7 9.5 L42.2 2.2 L42.9 4.5 L44.3 9.5 L47.8 2.2 L48.6 4.5 L50.0 9.5" fill="none" stroke="#000" stroke-width="3.6" stroke-linejoin="round"/>
<path d="M33 9.5 L36.5 2.2 L37.2 4.5 L38.7 9.5 L42.2 2.2 L42.9 4.5 L44.3 9.5 L47.8 2.2 L48.6 4.5 L50.0 9.5" fill="none" stroke="#8c8c8c" stroke-width="1.5" stroke-linejoin="round"/>
</g>
<rect x="214.5" y="514.5" width="31" height="17" fill="none" stroke="#ffff00"/>
<text x="230.4" y="528.04" text-anchor="middle" font-size="14" font-weight="bold" fill="#fff" letter-spacing="0.8">810</text>
<polygon points="62,549 69,542 101,542 94,549" fill="#3d9797"/>
<rect x="62" y="549" width="32" height="122" fill="#4cc7c7"/>
<polygon points="94,549 101,542 101,664 94,671" fill="#5ee9e9"/>
<polygon points="62,671 94,671 78,678" fill="#45afaf"/>
<polygon points="168,548 175,541 207,541 200,548" fill="#3d9797"/>
<rect x="168" y="548" width="32" height="122" fill="#4cc7c7"/>
<polygon points="200,548 207,541 207,663 200,670" fill="#5ee9e9"/>
<polygon points="168,670 200,670 184,677" fill="#45afaf"/>
<rect x="76.5" y="563.5" width="6" height="4" fill="#00ffff" stroke="#000"/>
<rect x="76.5" y="654.5" width="6" height="4" fill="#00ffff" stroke="#666"/>
<rect x="67.5" y="590.5" width="23" height="17" fill="none" stroke="#208888"/>
<text x="79" y="604" text-anchor="middle" font-size="13" font-weight="bold" fill="#fff" >Б2</text>
<rect x="182.5" y="562.5" width="6" height="4" fill="#00ffff" stroke="#000"/>
<rect x="182.5" y="653.5" width="6" height="4" fill="#00ffff" stroke="#000"/>
<rect x="173.5" y="589.5" width="23" height="17" fill="none" stroke="#208888"/>
<text x="185" y="603" text-anchor="middle" font-size="13" font-weight="bold" fill="#fff" >Б1</text>
<path d="M138 410.5 H289.5 V626.5 H502" fill="none" stroke="#d8d8d8" stroke-dasharray="3 3"/>
<path d="M1002 69.5 H1012 L1015 74 V83.5 L1019.5 88.5 V89.5 H1012 V92 L1009 95 L1006 92 V89.5 H995.5 V88.5 L1000 83.5 V74 Z" fill="#00ffff"/>
<path d="M995.5 89 L1000 84 V74 L1002.5 69.5 H1012" fill="none" stroke="#000" stroke-width="1.2"/>
<path d="M1012 69.5 L1015 74 V84 L1019.5 88.5 V89.5 H1012 M1006 89.5 H995.5" fill="none" stroke="#fff" stroke-width="1.2"/>
</svg>
<div class="abs" style="left:506px;top:101px;width:1px;height:1px;background:#fff"></div>
<div class="abs" style="left:112px;top:541px;width:43px;height:137px;background:#007e7e"></div>
<div class="abs" style="left:1164px;top:981px;width:42px;height:12px;border-radius:3px 3px 0 0;background:linear-gradient(#9c9c9c,#c4c4c4)"></div>
<div class="abs" style="left:1101px;top:990px;width:169px;height:4px;border-radius:3px 3px 0 0;background:linear-gradient(#c8c8c8,#dcdcdc);z-index:3"></div>
<svg class="abs" style="left:1178px;top:982px" width="14" height="11"><path d="M2.5 5.5 L7 1.5 L11.5 5.5 M2.5 9.5 L7 5.5 L11.5 9.5" fill="none" stroke="#404040" stroke-width="1"/></svg>
<div id="status">
 <div id="st1">16.10.2013 19:36:05</div>
 <div id="st2">Не работает: 182 Приемное поле</div>
</div>
</body></html>
